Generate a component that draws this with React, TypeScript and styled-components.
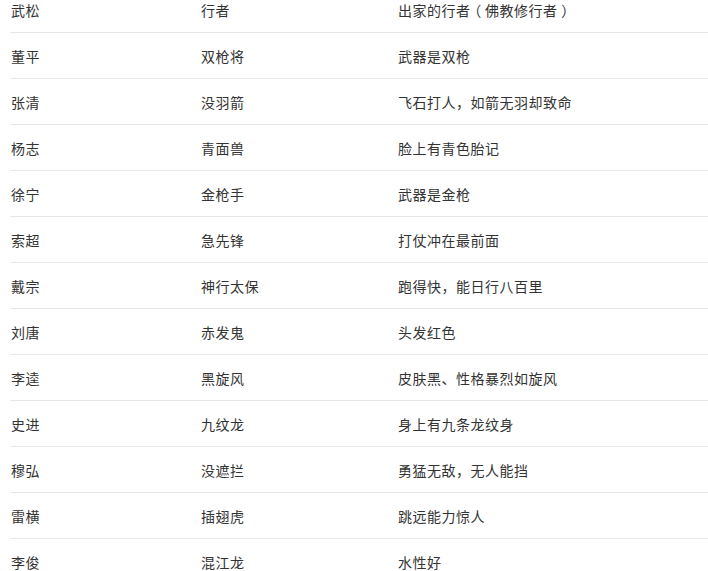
import React from "react";
import styled, { createGlobalStyle } from "styled-components";

const Global = createGlobalStyle`
  html, body { margin: 0; padding: 0; background: #ffffff; overflow: hidden; }
  body { font-family: "Microsoft YaHei", "Noto Sans CJK SC", "Noto Sans", sans-serif; }
`;

const Table = styled.div`
  margin: -13px 0 0 10px;
  display: flex;
  flex-direction: column;
`;

const Row = styled.div`
  display: grid;
  grid-template-columns: 190px 197px 1fr;
  height: 45px;
  border-bottom: 1px solid #e6e6e6;
  align-items: center;
`;

const Cell = styled.div`
  font-size: 14px;
  letter-spacing: 0.5px;
  color: #333333;
  padding-left: 1px;
  white-space: nowrap;
`;

const Paren = styled.span`
  display: inline-block;
  width: 14.5px;
  text-align: center;
  letter-spacing: 0;
  font-feature-settings: "halt" 1;
`;

const rows: [string, string, string][] = [
  ["武松", "行者", "出家的行者（佛教修行者）"],
  ["董平", "双枪将", "武器是双枪"],
  ["张清", "没羽箭", "飞石打人，如箭无羽却致命"],
  ["杨志", "青面兽", "脸上有青色胎记"],
  ["徐宁", "金枪手", "武器是金枪"],
  ["索超", "急先锋", "打仗冲在最前面"],
  ["戴宗", "神行太保", "跑得快，能日行八百里"],
  ["刘唐", "赤发鬼", "头发红色"],
  ["李逵", "黑旋风", "皮肤黑、性格暴烈如旋风"],
  ["史进", "九纹龙", "身上有九条龙纹身"],
  ["穆弘", "没遮拦", "勇猛无敌，无人能挡"],
  ["雷横", "插翅虎", "跳远能力惊人"],
  ["李俊", "混江龙", "水性好"],
];

function renderText(t: string) {
  return t.split(/([（）])/).map((part, i) =>
    part === "（" || part === "）" ? <Paren key={i}>{part}</Paren> : part
  );
}

export default function App() {
  return (
    <>
      <Global />
      <Table>
        {rows.map((r) => (
          <Row key={r[0]}>
            <Cell>{r[0]}</Cell>
            <Cell>{r[1]}</Cell>
            <Cell>{renderText(r[2])}</Cell>
          </Row>
        ))}
      </Table>
    </>
  );
}
